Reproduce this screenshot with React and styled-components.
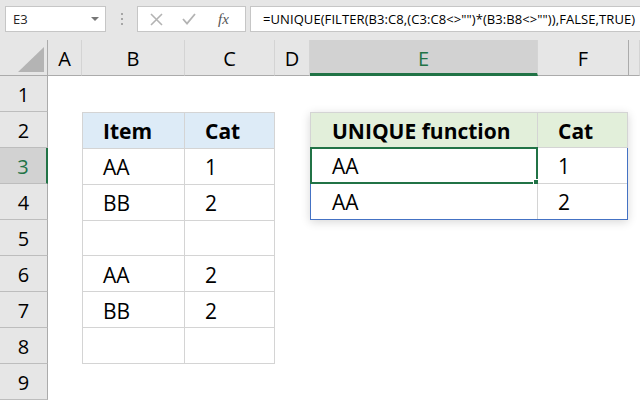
import React from 'react';
import styled, { createGlobalStyle } from 'styled-components';

const GlobalStyle = createGlobalStyle`
  html, body {
    margin: 0;
    padding: 0;
    background: #ffffff;
    overflow: hidden;
  }
  * {
    box-sizing: border-box;
  }
`;

const Page = styled.div`
  width: 640px;
  height: 401px;
  overflow: hidden;
  font-family: "Open Sans", "Noto Sans", sans-serif;
  background: #ffffff;
`;

const Toolbar = styled.div`
  height: 40px;
  background: #e6e6e6;
  display: flex;
  align-items: flex-start;
  padding: 6px 0 0 5px;
  white-space: nowrap;
`;

const NameBox = styled.div`
  width: 101px;
  height: 26px;
  background: #fff;
  border: 1px solid #c6c6c6;
  display: flex;
  align-items: center;
  justify-content: space-between;
  padding: 0 6px 0 7px;
  font-size: 13px;
  color: #262626;
`;

const Caret = styled.span`
  width: 0;
  height: 0;
  border-left: 4px solid transparent;
  border-right: 4px solid transparent;
  border-top: 4px solid #777;
`;

const Dots = styled.div`
  width: 31px;
  height: 26px;
  display: flex;
  flex-direction: column;
  align-items: center;
  justify-content: center;
  gap: 3px;

  span {
    width: 2px;
    height: 2px;
    background: #a6a6a6;
  }
`;

const FuncBox = styled.div`
  width: 109px;
  height: 26px;
  background: #fff;
  border: 1px solid #c6c6c6;
  display: flex;
  align-items: center;
  padding-left: 12px;
  gap: 19px;
  color: #b3b3b3;
`;

const Fx = styled.span`
  font-family: "Liberation Serif", "DejaVu Serif", serif;
  font-style: italic;
  font-size: 15px;
  color: #555;
  margin-left: 3px;
`;

const FormulaInput = styled.div`
  flex: 1;
  margin-left: 4px;
  height: 26px;
  background: #fff;
  border: 1px solid #c6c6c6;
  border-right: none;
  display: flex;
  align-items: center;
  padding-left: 12px;
  font-size: 13px;
  letter-spacing: 0.08px;
  color: #000;
  overflow: hidden;
`;

const Sheet = styled.div`
  display: grid;
  grid-template-columns: 48px 34px 103px 90px 35px 228px 91px 1fr;
  grid-template-rows: repeat(10, 36px);
  background: #fff;
`;

const Corner = styled.div`
  background: #e6e6e6;
  border-bottom: 1px solid #ababab;
  border-right: 1px solid #ababab;
  display: flex;
  align-items: flex-end;
  justify-content: flex-end;
  padding: 0 3px 3px 0;

  &::after {
    content: '';
    width: 26px;
    height: 25px;
    background: #b4b4b4;
    clip-path: polygon(100% 0, 100% 100%, 0 100%);
  }
`;

const ColHead = styled.div`
  background: ${p => (p.$active ? '#d2d2d2' : '#e6e6e6')};
  color: ${p => (p.$active ? '#217346' : '#000')};
  border-bottom: ${p => (p.$active ? '3px solid #217346' : '1px solid #ababab')};
  border-right: 1px solid ${p => (p.$dark ? '#ababab' : '#d4d4d4')};
  display: flex;
  align-items: center;
  justify-content: center;
  font-size: 20px;
  padding-top: ${p => (p.$active ? '3px' : '1px')};
`;

const RowHead = styled.div`
  grid-column: 1;
  grid-row: ${p => p.$row + 1};
  background: ${p => (p.$active ? '#d2d2d2' : '#e6e6e6')};
  color: ${p => (p.$active ? '#217346' : '#000')};
  border-bottom: 1px solid #bdbdbd;
  border-right: ${p => (p.$active ? '2px solid #217346' : '1px solid #ababab')};
  display: flex;
  align-items: center;
  justify-content: center;
  font-size: 20px;
  padding-top: 1px;
`;

const SourceTable = styled.div`
  grid-column: 3 / 5;
  grid-row: 3 / 10;
  display: grid;
  grid-template-columns: 1fr 90px;
  grid-template-rows: repeat(7, 1fr);
  border-top: 1px solid #d4d4d4;
  border-left: 1px solid #d4d4d4;
`;

const ResultTable = styled.div`
  grid-column: 6 / 8;
  grid-row: 3 / 6;
  display: grid;
  grid-template-columns: 228px 1fr;
  grid-template-rows: 36px 1fr;
  box-shadow: 0 2px 9px rgba(0, 0, 0, 0.16);
  margin-right: 1px;
`;

const ResultBody = styled.div`
  grid-column: 1 / 3;
  display: grid;
  grid-template-columns: 227px 1fr;
  grid-template-rows: 1fr 1fr;
  border: 1px solid #4472c4;
  margin-top: -1px;
`;

const Cell = styled.div`
  position: relative;
  background: ${p => p.$fill || '#fff'};
  font-weight: ${p => (p.$bold ? 700 : 400)};
  border-right: ${p => (p.$noRight ? 'none' : '1px solid #d4d4d4')};
  border-bottom: ${p => (p.$noBottom ? 'none' : '1px solid #d4d4d4')};
  border-top: ${p => (p.$top ? '1px solid #d4d4d4' : 'none')};
  border-left: ${p => (p.$left ? '1px solid #d4d4d4' : 'none')};
  display: flex;
  align-items: center;
  padding: 2px 0 0 ${p => p.$pad || 20}px;
  font-size: 21px;
  color: #000;
`;

const Selection = styled.div`
  position: absolute;
  left: -1px;
  top: -1px;
  right: -1px;
  bottom: -1px;
  border: 2px solid #217346;
  pointer-events: none;
`;

const Handle = styled.div`
  position: absolute;
  right: -4px;
  bottom: -4px;
  width: 7px;
  height: 7px;
  background: #217346;
  border: 1px solid #fff;
`;

const columns = ['A', 'B', 'C', 'D', 'E', 'F', ''];
const rows = [1, 2, 3, 4, 5, 6, 7, 8, 9];

const source = [
  ['AA', '1'],
  ['BB', '2'],
  ['', ''],
  ['AA', '2'],
  ['BB', '2'],
  ['', ''],
];

export default function App() {
  return (
    <Page>
      <GlobalStyle />
      <Toolbar>
        <NameBox>
          E3
          <Caret />
        </NameBox>
        <Dots>
          <span />
          <span />
          <span />
        </Dots>
        <FuncBox>
          <svg width="13" height="13" viewBox="0 0 13 13">
            <path d="M1 1 L12 12 M12 1 L1 12" stroke="#b3b3b3" strokeWidth="1.6" fill="none" />
          </svg>
          <svg width="14" height="12" viewBox="0 0 14 12">
            <path d="M1 6 L5 10.5 L13 1" stroke="#b3b3b3" strokeWidth="1.8" fill="none" />
          </svg>
          <Fx>fx</Fx>
        </FuncBox>
        <FormulaInput>{'=UNIQUE(FILTER(B3:C8,(C3:C8<>"")*(B3:B8<>"")),FALSE,TRUE)'}</FormulaInput>
      </Toolbar>

      <Sheet>
        <Corner />
        {columns.map((c, i) => (
          <ColHead key={i} $active={c === 'E'} $dark={c === 'F'}>
            {c}
          </ColHead>
        ))}
        {rows.map(r => (
          <RowHead key={r} $row={r} $active={r === 3}>
            {r}
          </RowHead>
        ))}

        <SourceTable>
          <Cell $fill="#ddebf7" $bold>Item</Cell>
          <Cell $fill="#ddebf7" $bold>Cat</Cell>
          {source.map((row, i) => (
            <React.Fragment key={i}>
              <Cell>{row[0]}</Cell>
              <Cell>{row[1]}</Cell>
            </React.Fragment>
          ))}
        </SourceTable>

        <ResultTable>
          <Cell $fill="#e2efda" $bold $top $left $pad={21}>UNIQUE function</Cell>
          <Cell $fill="#e2efda" $bold $top>Cat</Cell>
          <ResultBody>
            <Cell $pad={21}>
              AA
              <Selection>
                <Handle />
              </Selection>
            </Cell>
            <Cell $noRight>1</Cell>
            <Cell $noBottom $pad={21}>AA</Cell>
            <Cell $noRight $noBottom>2</Cell>
          </ResultBody>
        </ResultTable>
      </Sheet>
    </Page>
  );
}
